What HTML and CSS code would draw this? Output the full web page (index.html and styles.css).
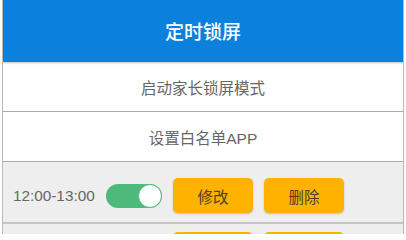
FILE: index.html
```html
<!DOCTYPE html>
<html lang="zh-CN">
<head>
<meta charset="utf-8">
<title>定时锁屏</title>
<link rel="stylesheet" href="styles.css">
</head>
<body>
<div class="page">
  <header class="header">定时锁屏</header>
  <div class="row link">启动家长锁屏模式</div>
  <div class="row link">设置白名单APP</div>
  <div class="slot first">
    <span class="time">12:00-13:00</span>
    <span class="toggle on"><span class="knob"></span></span>
    <button class="btn">修改</button>
    <button class="btn">删除</button>
  </div>
  <div class="slot">
    <span class="time"></span>
    <span class="toggle on"><span class="knob"></span></span>
    <button class="btn" aria-label="修改"></button>
    <button class="btn" aria-label="删除"></button>
  </div>
</div>
</body>
</html>
```
FILE: styles.css
```css
html, body {
  margin: 0;
  padding: 0;
  background: #ffffff;
  overflow: hidden;
}
.page {
  margin-left: 2px;
  width: 400px;
  height: 234px;
  overflow: hidden;
  border-left: 1px solid #b8b8b8;
  border-right: 1px solid #b8b8b8;
  font-family: "Liberation Sans", "Noto Sans CJK SC", sans-serif;
  display: flex;
  flex-direction: column;
}
.header {
  height: 62px;
  flex: none;
  background: #0b80dc;
  color: #ffffff;
  font-family: "Noto Sans CJK SC", sans-serif;
  font-weight: 500;
  font-size: 19px;
  display: flex;
  align-items: center;
  justify-content: center;
  padding-bottom: 1px;
  box-sizing: border-box;
  box-shadow: 0 1px 2px rgba(0,0,0,0.25);
  position: relative;
  z-index: 1;
}
.row {
  flex: none;
  height: 49px;
  display: flex;
  align-items: center;
  justify-content: center;
  border-bottom: 1px solid #ababab;
  color: #666666;
  font-size: 15.5px;
  background: #ffffff;
}
.slot {
  flex: none;
  height: 35px;
  display: flex;
  align-items: center;
  gap: 11px;
  background: #eeeeee;
  padding: 8px 0 9px 10px;
  border-bottom: 2px solid #c4c4c4;
}
.slot.first {
  padding-top: 16px;
}
.time {
  color: #666666;
  font-size: 15.3px;
  width: 82px;
}
.toggle {
  width: 56px;
  height: 24px;
  border-radius: 12px;
  background: #4dba7b;
  display: flex;
  align-items: center;
  justify-content: flex-end;
  box-sizing: border-box;
}
.knob {
  width: 24px;
  height: 24px;
  border-radius: 50%;
  background: #ffffff;
  box-sizing: border-box;
  border: 1px solid #4dba7b;
}
.btn {
  width: 80px;
  height: 35px;
  border: none;
  border-radius: 5px;
  background: #ffb200;
  color: #4f4120;
  font-family: "Liberation Sans", "Noto Sans CJK SC", sans-serif;
  font-size: 15.5px;
  padding: 0;
  box-shadow: 0 1px 2px rgba(0,0,0,0.2);
}
```
